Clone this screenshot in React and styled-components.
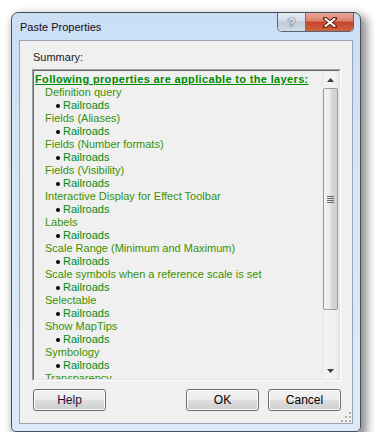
import styled, { createGlobalStyle } from "styled-components";

const GlobalStyle = createGlobalStyle`
  html, body {
    margin: 0;
    padding: 0;
    background: #ffffff;
  }
  body {
    font-family: "Liberation Sans", Arial, sans-serif;
  }
`;

const Window = styled.div`
  margin: 12px 0 0 11px;
  width: 350px;
  height: 420px;
  box-sizing: border-box;
  border: 1px solid #4a4f57;
  border-radius: 7px 7px 5px 5px;
  background: linear-gradient(180deg, #c9def5 0%, #d7e6f8 40%, #dce9f9 100%);
  box-shadow: 4px 5px 10px 2px rgba(0, 0, 0, 0.45);
  display: flex;
  flex-direction: column;
  padding: 0 7px 7px 7px;
`;

const TitleBar = styled.div`
  height: 27px;
  display: flex;
  align-items: flex-start;
`;

const Title = styled.div`
  margin: 8px 0 0 1px;
  font-size: 11px;
  color: #1a0a10;
  flex: 1;
`;

const CaptionButtons = styled.div`
  display: flex;
  margin-right: -1px;
  border: 1px solid #5a6470;
  border-top: none;
  border-radius: 0 0 5px 5px;
  overflow: hidden;
  height: 18px;
`;

const HelpCaption = styled.div`
  width: 27px;
  display: flex;
  align-items: center;
  justify-content: center;
  background: linear-gradient(180deg, #e6edf5 0%, #d3dce8 45%, #bfcbd9 50%, #cfdbe8 100%);
  border-right: 1px solid #6a7480;
  font-size: 13px;
  font-weight: bold;
  color: #f4f6f9;
  text-shadow: 0 0 1px #3a4450, 0 0 1px #3a4450, 0 0 1px #3a4450;
`;

const CloseCaption = styled.div`
  width: 47px;
  display: flex;
  align-items: center;
  justify-content: center;
  background: linear-gradient(180deg, #e9a99b 0%, #dd7f6b 45%, #c7442b 50%, #d0623f 100%);
`;

const Client = styled.div`
  flex: 1;
  background: #f0f0f0;
  border: 1px solid #9aa6b4;
  display: flex;
  flex-direction: column;
  padding: 10px 11px 0 12px;
  position: relative;
`;

const Label = styled.div`
  font-size: 11px;
  line-height: 13px;
  color: #1a1a1a;
  margin-left: 1px;
  margin-bottom: 5px;
`;

const ListBox = styled.div`
  height: 312px;
  box-sizing: border-box;
  border-top: 1px solid #a0a0a0;
  border-left: 1px solid #a0a0a0;
  border-right: 1px solid #ffffff;
  border-bottom: 1px solid #ffffff;
  display: flex;
`;

const ListInner = styled.div`
  flex: 1;
  display: flex;
  border-top: 1px solid #696969;
  border-left: 1px solid #696969;
  border-right: 1px solid #e3e3e3;
  border-bottom: 1px solid #e3e3e3;
  overflow: hidden;
`;

const Lines = styled.div`
  flex: 1;
  padding: 2px 0 0 1px;
  overflow: hidden;
  font-size: 11px;
  line-height: 13px;
`;

const Heading = styled.div`
  font-weight: bold;
  text-decoration: underline;
  letter-spacing: 0.35px;
  color: #008a00;
  white-space: nowrap;
`;

const Category = styled.div`
  padding-left: 10px;
  color: #3a9200;
  white-space: nowrap;
`;

const Layer = styled.div`
  padding-left: 21px;
  color: #008a10;
  display: flex;
  align-items: center;
  white-space: nowrap;

  &::before {
    content: "";
    width: 4px;
    height: 4px;
    border-radius: 50%;
    background: #000;
    margin-right: 3px;
  }
`;

const ScrollBar = styled.div`
  width: 17px;
  display: flex;
  flex-direction: column;
  background: linear-gradient(90deg, #e8e8e8 0%, #f4f4f4 20%, #f0f0f0 80%, #e6e6e6 100%);
`;

const Arrow = styled.div`
  height: 17px;
  display: flex;
  align-items: center;
  justify-content: center;
`;

const Thumb = styled.div`
  height: 222px;
  margin: 0 1px;
  box-sizing: border-box;
  border: 1px solid #9a9a9a;
  border-radius: 2px;
  background: linear-gradient(90deg, #f3f3f3 0%, #ebebeb 45%, #d8d8d8 55%, #cfcfcf 100%);
  display: flex;
  align-items: center;
  justify-content: center;
`;

const Track = styled.div`
  flex: 1;
`;

const ButtonRow = styled.div`
  display: flex;
  gap: 9px;
  margin-top: 8px;
  padding-left: 1px;
`;

const Spacer = styled.div`
  flex: 1;
`;

const Button = styled.button`
  width: 73px;
  height: 22px;
  box-sizing: border-box;
  border: 1px solid #707070;
  border-radius: 3px;
  background: linear-gradient(180deg, #f2f2f2 0%, #ebebeb 48%, #dddddd 52%, #cfcfcf 100%);
  box-shadow: inset 0 0 0 1px #fbfbfb;
  font-family: "Liberation Sans", Arial, sans-serif;
  font-size: 12px;
  line-height: 18px;
  color: ${(p) => p.$color || "#000"};
  padding: 0;
`;

const Grip = styled.svg`
  position: absolute;
  right: 1px;
  bottom: 1px;
`;

const entries = [
  "Definition query",
  "Fields (Aliases)",
  "Fields (Number formats)",
  "Fields (Visibility)",
  "Interactive Display for Effect Toolbar",
  "Labels",
  "Scale Range (Minimum and Maximum)",
  "Scale symbols when a reference scale is set",
  "Selectable",
  "Show MapTips",
  "Symbology",
  "Transparency",
];

export default function App() {
  return (
    <>
      <GlobalStyle />
      <Window>
        <TitleBar>
          <Title>Paste Properties</Title>
          <CaptionButtons>
            <HelpCaption>?</HelpCaption>
            <CloseCaption>
              <svg width="14" height="11" viewBox="0 0 14 11">
                <path
                  d="M2 1.5 L12 9.5 M12 1.5 L2 9.5"
                  stroke="#5a1a10"
                  strokeWidth="4"
                  strokeLinecap="round"
                />
                <path
                  d="M2.5 2 L11.5 9 M11.5 2 L2.5 9"
                  stroke="#ffffff"
                  strokeWidth="2.2"
                  strokeLinecap="round"
                />
              </svg>
            </CloseCaption>
          </CaptionButtons>
        </TitleBar>
        <Client>
          <Label>Summary:</Label>
          <ListBox>
            <ListInner>
              <Lines>
                <Heading>Following properties are applicable to the layers:</Heading>
                {entries.map((e, i) => (
                  <div key={e}>
                    <Category>{e}</Category>
                    {i < entries.length - 1 && <Layer>Railroads</Layer>}
                  </div>
                ))}
              </Lines>
              <ScrollBar>
                <Arrow>
                  <svg width="7" height="4" viewBox="0 0 7 4">
                    <path d="M3.5 0 L7 4 L0 4 Z" fill="#404040" />
                  </svg>
                </Arrow>
                <Thumb>
                  <svg width="7" height="7" viewBox="0 0 7 7">
                    <path d="M0 0.5 H7 M0 2.5 H7 M0 4.5 H7 M0 6.5 H7" stroke="#6a6a6a" strokeWidth="1" />
                  </svg>
                </Thumb>
                <Track />
                <Arrow>
                  <svg width="7" height="4" viewBox="0 0 7 4">
                    <path d="M0 0 L7 0 L3.5 4 Z" fill="#404040" />
                  </svg>
                </Arrow>
              </ScrollBar>
            </ListInner>
          </ListBox>
          <ButtonRow>
            <Button $color="#2a0a40">Help</Button>
            <Spacer />
            <Button>OK</Button>
            <Button>Cancel</Button>
          </ButtonRow>
          <Grip width="10" height="10" viewBox="0 0 10 10">
            <g fill="#b0b0b0">
              <rect x="8" y="0" width="2" height="2" />
              <rect x="4" y="4" width="2" height="2" />
              <rect x="8" y="4" width="2" height="2" />
              <rect x="0" y="8" width="2" height="2" />
              <rect x="4" y="8" width="2" height="2" />
              <rect x="8" y="8" width="2" height="2" />
            </g>
          </Grip>
        </Client>
      </Window>
    </>
  );
}
